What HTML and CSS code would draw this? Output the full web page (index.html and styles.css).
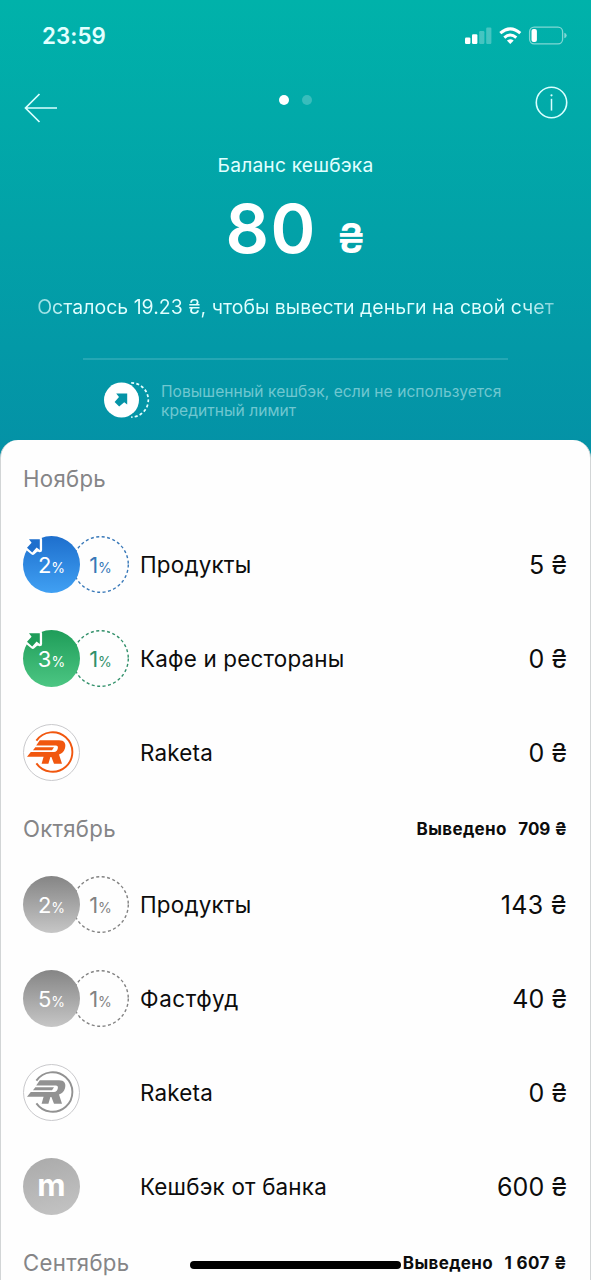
FILE: index.html
```html
<!DOCTYPE html>
<html lang="ru">
<head>
<meta charset="utf-8">
<title>Баланс кешбэка</title>
<link rel="stylesheet" href="styles.css">
</head>
<body>
<svg class="defs" width="0" height="0" aria-hidden="true">
  <symbol id="boost" viewBox="0 0 22 22">
    <path d="M6 3.2H16.8V14L14 12.8 9.8 16.6 4 11.8 8.2 7Z" fill="#fff" stroke="#fff" stroke-width="4.6" stroke-linejoin="round"/>
    <path d="M6 3.2H16.8V14L13.6 11.4 9.2 16.4 4 11.8 8.6 6.8Z" fill="currentColor"/>
  </symbol>
  <symbol id="raketa" viewBox="0 0 57 57">
    <circle cx="28.5" cy="28.5" r="28" fill="#fff" stroke="#c9c9cc" stroke-width="1"/>
    <path d="M13.4 16.6A19.8 19.8 0 1 1 13.4 39.4" fill="none" stroke="currentColor" stroke-width="1.9"/>
    <path d="M16.8 16.2H36C41.4 16.2 43.3 19.6 42 24.2C41 27.6 39.2 29.4 36 30.6L39 39.8H31L28.4 33H27.4L25.4 39.8H18.6L20.6 32.8H4L7.8 28H31C33.2 28 34.2 26.6 34.8 24.6C35.2 22.6 34.6 21.6 32.8 21.6H13.2Z" fill="currentColor"/>
    <path d="M12.3 23.2H31L29 26.2H10Z" fill="currentColor"/>
  </symbol>
</svg>
<main class="screen">
  <header class="hero">
    <div class="status">
      <span class="time">23:59</span>
      <svg class="signals" width="104" height="20" viewBox="0 0 104 20">
        <g fill="#fff">
          <rect x="2" y="11.5" width="5.4" height="6.5" rx="1.2"/>
          <rect x="9" y="8.3" width="5.4" height="9.7" rx="1.2"/>
          <g opacity=".27"><rect x="16.2" y="5" width="5.2" height="13" rx="1.2"/><rect x="23.2" y="1.6" width="5.2" height="16.4" rx="1.2"/></g>
          <path d="M47.3 18 43.9 14.6Q47.3 11.7 50.7 14.6Z"/>
        </g>
        <g fill="none" stroke="#fff" stroke-width="3">
          <path d="M37.3 7.2Q47.3-1.5 57.3 7.2"/><path d="M41.3 11.6Q47.3 6.4 53.3 11.6"/>
        </g>
        <rect x="66.6" y="1.2" width="33" height="16.6" rx="4.6" fill="none" stroke="#fff" stroke-opacity=".5" stroke-width="1.3"/>
        <rect x="68.5" y="3.1" width="5.4" height="12.8" rx="2" fill="#fff"/>
        <path d="M101.3 6.8Q103.7 7.4 103.7 9.5T101.3 12.2Z" fill="#fff" opacity=".5"/>
      </svg>
    </div>
    <nav class="nav">
      <svg class="back" width="34" height="30" viewBox="0 0 34 30"><path d="M1.5 15H33M15.5 1 1.5 15 15.5 29" fill="none" stroke="#d9ffff" stroke-width="1.7"/></svg>
      <div class="pager"><i class="dot dot-on"></i><i class="dot"></i></div>
      <svg class="info" width="34" height="34" viewBox="0 0 34 34"><g fill="none" stroke="#d9ffff"><circle cx="17.5" cy="16.5" r="15.2" stroke-width="1.6"/><path d="M17.5 12.8V24.6" stroke-width="1.5"/></g><circle cx="17.5" cy="9.3" r="1.1" fill="#d9ffff"/></svg>
    </nav>
    <div class="caption">Баланс кешбэка</div>
    <div class="balance"><span class="sum">80</span><span class="cur">₴</span></div>
    <div class="left">Осталось 19.23 ₴, чтобы вывести деньги на свой счет</div>
    <div class="hint">
      <svg width="46" height="36" viewBox="0 0 46 36"><path d="M27.2 .9A17.1 17.1 0 0 1 27.2 35.1" fill="none" stroke="#e4ffff" stroke-width="1.7" stroke-dasharray="3 2.2"/><circle cx="17.5" cy="18" r="17.5" fill="#fff"/><path d="M12.2 11.4H23.2V22.4L20.2 20.2 15.2 24.6 10.6 20 15 15Z" fill="#0594a7"/></svg>
      <p class="hint-text">Повышенный кешбэк, если не используется<br>кредитный лимит</p>
    </div>
  </header>

  <section class="sheet">
    <div class="month month-first"><span class="name">Ноябрь</span></div>
    <div class="row blue">
      <div class="rates"><span class="rate extra">1<small>%</small></span><span class="rate main">2<small>%</small></span><svg class="boost"><use href="#boost"/></svg>
        <svg class="ring" viewBox="0 0 57 57"><circle cx="28.5" cy="28.5" r="27.8"/></svg></div>
      <span class="title">Продукты</span><span class="amount">5 ₴</span>
    </div>
    <div class="row green">
      <div class="rates"><span class="rate extra">1<small>%</small></span><span class="rate main">3<small>%</small></span><svg class="boost"><use href="#boost"/></svg>
        <svg class="ring" viewBox="0 0 57 57"><circle cx="28.5" cy="28.5" r="27.8"/></svg></div>
      <span class="title">Кафе и рестораны</span><span class="amount">0 ₴</span>
    </div>
    <div class="row orange">
      <div class="rates"><svg class="logo"><use href="#raketa"/></svg></div>
      <span class="title">Raketa</span><span class="amount">0 ₴</span>
    </div>

    <div class="month"><span class="name">Октябрь</span><span class="paid">Выведено<b>709 ₴</b></span></div>
    <div class="row gray">
      <div class="rates"><span class="rate extra">1<small>%</small></span><span class="rate main">2<small>%</small></span>
        <svg class="ring" viewBox="0 0 57 57"><circle cx="28.5" cy="28.5" r="27.8"/></svg></div>
      <span class="title">Продукты</span><span class="amount loose">143 ₴</span>
    </div>
    <div class="row gray">
      <div class="rates"><span class="rate extra">1<small>%</small></span><span class="rate main">5<small>%</small></span>
        <svg class="ring" viewBox="0 0 57 57"><circle cx="28.5" cy="28.5" r="27.8"/></svg></div>
      <span class="title wide">Фастфуд</span><span class="amount">40 ₴</span>
    </div>
    <div class="row gray">
      <div class="rates"><svg class="logo"><use href="#raketa"/></svg></div>
      <span class="title">Raketa</span><span class="amount">0 ₴</span>
    </div>
    <div class="row gray">
      <div class="rates"><span class="mono">m</span></div>
      <span class="title">Кешбэк от банка</span><span class="amount">600 ₴</span>
    </div>
    <div class="month"><span class="name">Сентябрь</span><span class="paid">Выведено<b class="loose">1 607 ₴</b></span></div>
  </section>
  <div class="home"></div>
</main>
</body>
</html>
```
FILE: styles.css
```css
* { box-sizing: border-box; }
body { margin: 0; font-family: Inter, "Noto Sans", sans-serif; color: #0c0c0c; }
.defs { position: absolute; }
.screen { position: relative; width: 591px; height: 1280px; overflow: hidden; background: linear-gradient(#00b2aa, #0491a6 460px); }
.hero { height: 440px; display: flex; flex-direction: column; align-items: center; color: #e2ffff; }
.status { width: 100%; height: 72px; padding: 0 24px 0 42px; display: flex; justify-content: space-between; align-items: center; }
.time { padding-bottom: 2px; font-size: 22.3px; font-weight: 600; letter-spacing: .1px; }
.nav { width: 100%; height: 70px; padding: 14px 23px 0 24px; display: grid; grid-template-columns: 34px 1fr 34px; align-items: start; }
.back { margin-top: 7px; }
.pager { display: flex; justify-content: center; gap: 13px; padding: 9px 2px 0 0; }
.dot { width: 10px; height: 10px; border-radius: 50%; background: rgba(255, 255, 255, .22); }
.dot-on { background: #fff; }
.caption { margin-top: 9px; line-height: 28px; font-size: 19.2px; letter-spacing: .2px; }
.balance { display: flex; align-items: baseline; gap: 20px; margin-top: 11px; line-height: 76px; color: #fff; }
.sum { font-size: 68px; font-weight: 600; letter-spacing: 1.4px; }
.cur { font-size: 41px; font-weight: 600; }
.left { margin-top: 17px; line-height: 28px; font-size: 19.5px; white-space: nowrap; background: linear-gradient(90deg, #90dbe0, #e2ffff 7%, #e2ffff 93%, #80d0d8); -webkit-background-clip: text; background-clip: text; color: transparent; }
.hint { width: 425px; margin-top: 37px; padding: 22px 0 0 21px; border-top: 2px solid #25a7b4; display: flex; gap: 11px; }
.hint-text { margin: 0; font-size: 15.6px; line-height: 19px; letter-spacing: .03px; color: #70c7d0; white-space: nowrap; }
.sheet { height: 840px; background: #fefefe; border-radius: 18px 18px 0 0; border: solid #d2d5d6; border-width: 0 1px; padding: 0 23px 0 22px; }
.month { height: 58px; display: flex; align-items: center; justify-content: space-between; }
.month-first { height: 77.5px; }
.name { font-size: 22.2px; letter-spacing: .3px; color: #858587; }
.paid { display: flex; gap: 11.5px; font-size: 17px; font-weight: 700; letter-spacing: .35px; }
.paid b { font-weight: 700; letter-spacing: 0; }
.row { height: 94px; display: grid; grid-template-columns: 117px 1fr auto; align-items: center; }
.rates { position: relative; width: 107px; height: 57px; }
.rate { position: absolute; top: 0; left: 0; width: 57px; height: 57px; display: flex; justify-content: center; align-items: baseline; line-height: 58px; font-size: 22px; border-radius: 50%; }
.rate small { font-size: 14px; }
.main { color: #fff; background: linear-gradient(var(--from), var(--to)); z-index: 1; }
.extra { left: 49px; color: var(--ink); }
.ring { position: absolute; left: 49px; top: 0; width: 57px; height: 57px; }
.ring circle { fill: none; stroke: var(--ink); stroke-width: 1.4; stroke-dasharray: 3 2.5; }
.boost { position: absolute; left: 0; top: 0; width: 22px; height: 22px; z-index: 2; color: var(--from); }
.logo { display: block; width: 57px; height: 57px; color: var(--logo); }
.mono { display: flex; align-items: center; justify-content: center; width: 57px; height: 57px; padding-bottom: 4px; border-radius: 50%; background: linear-gradient(165deg, #aaa, #c4c4c4); color: #fff; font-size: 31px; font-weight: 700; }
.title { font-size: 22.4px; letter-spacing: .2px; }
.wide { letter-spacing: .6px; }
.amount { font-size: 25px; }
.loose, .paid .loose { letter-spacing: .35px; }
.blue { --from: #1e6fcd; --to: #40a0f3; --ink: #3878b8; }
.green { --from: #1f9d59; --to: #4cc683; --ink: #31906a; }
.orange { --logo: #f1570f; }
.gray { --from: #858585; --to: #c6c6c6; --ink: #828282; --logo: #929292; }
.home { position: absolute; left: 190px; top: 1261px; width: 211px; height: 8px; border-radius: 4px; background: #000; }
```
